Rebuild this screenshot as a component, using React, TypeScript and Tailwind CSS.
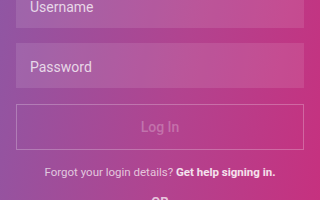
export default function App() {
  return (
    <div
      className="w-[320px] h-[200px] overflow-hidden bg-[linear-gradient(100deg,#9056a3_0%,#b2438f_55%,#c6317f_100%)]"
      style={{ fontFamily: "Roboto, 'Noto Sans', sans-serif" }}
    >
      <div className="-mt-[17px] px-[16px] flex flex-col">
        <div className="h-[45px] bg-white/10 flex items-end pb-[12px] px-[14px]">
          <span className="text-[14px] leading-[17px] text-white/75">Username</span>
        </div>
        <div className="mt-[15px] h-[45px] bg-white/10 flex items-center pt-[4px] px-[14px]">
          <span className="text-[14px] leading-[17px] text-white/75">Password</span>
        </div>
        <div className="mt-[16px] h-[46px] border border-white/25 flex items-center justify-center">
          <span className="text-[14px] text-white/25 font-medium">Log In</span>
        </div>
        <div className="mt-[15px] text-center text-[11.5px] leading-[14px] text-white/70">
          Forgot your login details? <span className="font-bold text-white/85">Get help signing in.</span>
        </div>
        <div className="mt-[15px] flex items-center gap-3">
          <div className="flex-1 h-px bg-white/20" />
          <span className="text-[13px] leading-[16px] font-bold text-white/70">OR</span>
          <div className="flex-1 h-px bg-white/20" />
        </div>
      </div>
    </div>
  );
}
